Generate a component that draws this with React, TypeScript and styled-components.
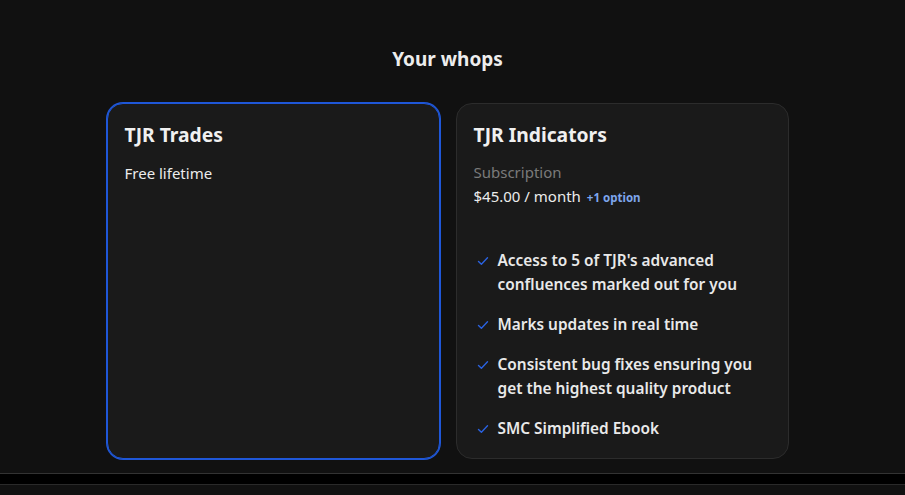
import styled, { createGlobalStyle } from "styled-components";

const GlobalStyle = createGlobalStyle`
  html, body {
    margin: 0;
    padding: 0;
    background: #111111;
  }
  body {
    font-family: "Noto Sans", "Open Sans", "Liberation Sans", sans-serif;
    color: #ececec;
  }
`;

type Whop = {
  name: string;
  kind?: string;
  price: string;
  extra?: string;
  features: string[];
  selected?: boolean;
};

const whops: Whop[] = [
  { name: "TJR Trades", price: "Free lifetime", features: [], selected: true },
  {
    name: "TJR Indicators",
    kind: "Subscription",
    price: "$45.00 / month",
    extra: "+1 option",
    features: [
      "Access to 5 of TJR's advanced confluences marked out for you",
      "Marks updates in real time",
      "Consistent bug fixes ensuring you get the highest quality product",
      "SMC Simplified Ebook",
    ],
  },
];

function Check() {
  return (
    <svg width="12" height="12" viewBox="0 0 12 12" fill="none">
      <path
        d="M1.5 6.4 L4.4 9.2 L10.5 2.8"
        stroke="#2a62e0"
        strokeWidth="1.4"
        strokeLinecap="round"
        strokeLinejoin="round"
      />
    </svg>
  );
}

export default function App() {
  return (
    <>
      <GlobalStyle />
      <Main>
        <Heading>Your whops</Heading>
        <CardGrid>
          {whops.map((w) => (
            <Card key={w.name} selected={w.selected}>
              <CardTitle>{w.name}</CardTitle>
              {w.kind && <Kind>{w.kind}</Kind>}
              <Price tight={!!w.kind}>
                {w.price}
                {w.extra && <Extra>{w.extra}</Extra>}
              </Price>
              {w.features.length > 0 && (
                <FeatureList>
                  {w.features.map((f) => (
                    <Feature key={f}>
                      <CheckWrap>
                        <Check />
                      </CheckWrap>
                      <span>{f}</span>
                    </Feature>
                  ))}
                </FeatureList>
              )}
            </Card>
          ))}
        </CardGrid>
      </Main>
      <Footer />
    </>
  );
}

const Main = styled.main`
  height: 473px;
  box-sizing: border-box;
  padding: 47px 10px 0 0;
  display: flex;
  flex-direction: column;
  align-items: center;
`;

const Heading = styled.h2`
  margin: 0;
  font-size: 19px;
  line-height: 24px;
  font-weight: 700;
  color: #ededed;
`;

const CardGrid = styled.div`
  margin-top: 32px;
  display: grid;
  grid-template-columns: 333px 333px;
  gap: 16px;
  height: 353px;
`;

const Card = styled.div<{ selected?: boolean }>`
  box-sizing: border-box;
  background: #1a1a1a;
  border: 1px solid ${({ selected }) => (selected ? "#1f57d8" : "#2c2c2c")};
  box-shadow: ${({ selected }) => (selected ? "0 0 0 1px #1f57d8" : "none")};
  border-radius: 16px;
  padding: 18px 17px 17px;
  display: flex;
  flex-direction: column;
`;

const CardTitle = styled.div`
  font-size: 19.3px;
  line-height: 26px;
  font-weight: 700;
  color: #f0f0f0;
  margin-bottom: 14px;
`;

const Kind = styled.div`
  font-size: 15px;
  line-height: 24px;
  color: #7b7b7b;
  margin-top: -2px;
`;

const Price = styled.div<{ tight?: boolean }>`
  font-size: 15px;
  line-height: ${({ tight }) => (tight ? "24px" : "22px")};
  color: #ececec;
  display: flex;
  align-items: baseline;
  gap: 6px;
`;

const Extra = styled.span`
  font-size: 11.5px;
  font-weight: 700;
  color: #7ea6ec;
`;

const FeatureList = styled.ul`
  list-style: none;
  margin: 39px 0 0;
  padding: 0 0 0 3px;
  display: flex;
  flex-direction: column;
  gap: 16px;
`;

const Feature = styled.li`
  display: flex;
  gap: 9px;
  font-size: 15.4px;
  line-height: 24px;
  font-weight: 600;
  color: #e9e9e9;
`;

const CheckWrap = styled.span`
  flex: none;
  height: 24px;
  display: flex;
  align-items: center;
`;

const Footer = styled.footer`
  height: 10px;
  background: #000;
  border-top: 1px solid #333;
  border-bottom: 1px solid #2a2a2a;
`;
